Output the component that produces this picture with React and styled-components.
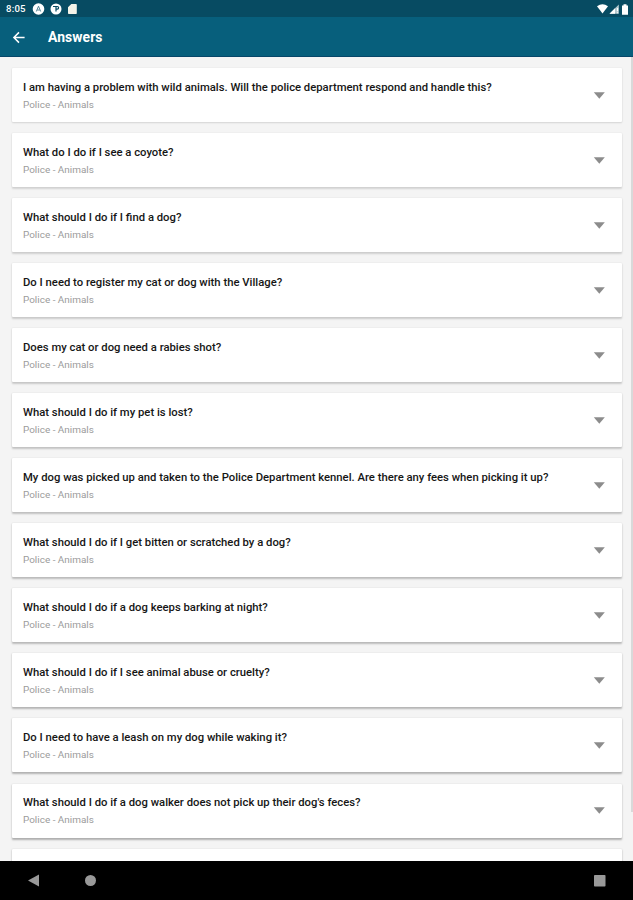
import React from "react";
import styled, { createGlobalStyle } from "styled-components";

const GlobalStyle = createGlobalStyle`
  * { box-sizing: border-box; }
  body { margin: 0; font-family: Roboto, sans-serif; background: #f4f4f4; }
`;

const Screen = styled.div`
  display: flex;
  flex-direction: column;
  width: 633px;
  height: 900px;
  overflow: hidden;
  background: #f4f4f4;
`;

const StatusBar = styled.div`
  display: flex;
  align-items: center;
  flex: none;
  height: 17px;
  padding: 1px 4px 0 6px;
  background: #074b62;
  color: #fff;
`;

const Clock = styled.span`
  width: 26px;
  font-size: 9.6px;
  font-weight: 500;
  line-height: 16px;
  letter-spacing: 0.2px;
`;

const StatusIcons = styled.div`
  display: flex;
  align-items: center;
  gap: ${(p) => p.$gap}px;
  margin-left: ${(p) => (p.$end ? "auto" : "0")};
  svg { display: block; }
`;

const AppBar = styled.header`
  display: flex;
  align-items: center;
  flex: none;
  height: 40px;
  padding: 1px 12px 0;
  gap: 22px;
  background: #075f7c;
  border-bottom: 1px solid #07476a;
  color: #fff;
`;

const BackButton = styled.button`
  display: flex;
  padding: 0;
  border: 0;
  background: none;
  color: inherit;
`;

const Title = styled.h1`
  margin: 0;
  font-size: 13.9px;
  font-weight: 700;
  line-height: 18px;
  letter-spacing: 0.08px;
`;

const Content = styled.div`
  display: flex;
  flex: 1;
  min-height: 0;
  overflow: hidden;
`;

const List = styled.main`
  display: flex;
  flex-direction: column;
  flex: 1;
  gap: 11.06px;
  padding: 11px 9px 0 12px;
`;

const Card = styled.article`
  display: flex;
  align-items: center;
  flex: none;
  height: 54px;
  padding: 0 17px 0 11px;
  border-radius: 1px;
  background: #fff;
  box-shadow: 0 ${(p) => 1 + p.$depth * 0.6}px 2px
      rgba(0, 0, 0, ${(p) => 0.12 + p.$depth * 0.16}),
    0 0 2px rgba(0, 0, 0, 0.07);
`;

const CardText = styled.div`
  flex: 1;
  padding-top: 1px;
  white-space: nowrap;
`;

const Question = styled.h2`
  margin: 0;
  color: #161616;
  font-size: 11.29px;
  font-weight: 500;
  line-height: 17px;
`;

const Category = styled.p`
  margin: 0;
  color: #9b9b9b;
  font-size: 9.95px;
  line-height: 17px;
`;

const ScrollTrack = styled.div`
  flex: none;
  width: 2px;
`;

const ScrollThumb = styled.div`
  height: 755px;
  background: #d9d9d9;
`;

const NavBar = styled.nav`
  display: flex;
  align-items: center;
  flex: none;
  height: 38.6px;
  padding: 0 27px;
  background: #000;
  color: #999;
  svg { display: block; }
  svg:nth-child(2) { margin-left: 44px; }
  svg:last-child { margin-left: auto; }
`;

const questions = [
  "I am having a problem with wild animals. Will the police department respond and handle this?",
  "What do I do if I see a coyote?",
  "What should I do if I find a dog?",
  "Do I need to register my cat or dog with the Village?",
  "Does my cat or dog need a rabies shot?",
  "What should I do if my pet is lost?",
  "My dog was picked up and taken to the Police Department kennel. Are there any fees when picking it up?",
  "What should I do if I get bitten or scratched by a dog?",
  "What should I do if a dog keeps barking at night?",
  "What should I do if I see animal abuse or cruelty?",
  "Do I need to have a leash on my dog while waking it?",
  "What should I do if a dog walker does not pick up their dog's feces?",
];

function AnswerCard({ question, depth }) {
  return (
    <Card $depth={depth}>
      <CardText>
        <Question>{question}</Question>
        <Category>Police - Animals</Category>
      </CardText>
      <svg width="12" height="7" viewBox="0 0 12 7">
        <path d="M.8.2h11L6.3 6.8z" fill="#8c8c8c" />
      </svg>
    </Card>
  );
}

export default function App() {
  return (
    <Screen>
      <GlobalStyle />
      <StatusBar>
        <Clock>8:05</Clock>
        <StatusIcons $gap={5}>
          <svg width="13" height="12" viewBox="0 0 13 12">
            <circle cx="6.5" cy="6" r="5.8" fill="#fff" />
            <path d="M4.3 8.5 6.5 3.2l2.2 5.3M5.2 7h2.6" fill="none" stroke="#47788a" strokeWidth=".9" />
          </svg>
          <svg width="12" height="12" viewBox="0 0 12 12">
            <circle cx="6" cy="6" r="5.5" fill="#fff" />
            <path d="M3 3.5h3v5M6 3.5h1.3a1.3 1.3 0 0 1 0 2.6H6" fill="none" stroke="#074b62" strokeWidth="1.2" />
          </svg>
          <svg width="11" height="12" viewBox="0 0 11 12">
            <path d="M4.3 1H9q.8 0 .8.8v8.4q0 .8-.8.8H1.8q-.8 0-.8-.8V4.3z" fill="#f4f4e9" />
          </svg>
        </StatusIcons>
        <StatusIcons $gap={1} $end>
          <svg width="11" height="10" viewBox="0 0 11 10">
            <path d="M0 2.2Q5.5-1.8 11 2.2L5.5 9.5z" fill="#fff" />
          </svg>
          <svg width="11" height="10" viewBox="0 0 11 10">
            <path d="M.5 9.8 9.8.5v9.3z" fill="#b4c8cf" />
            <path d="M.5 9.8 6 4.3v5.5z" fill="#fff" />
            <path d="M8.5 4v3.3M8.5 8.3v1" stroke="#fff" strokeWidth="1.2" />
          </svg>
          <svg width="8" height="11" viewBox="0 0 8 11">
            <path d="M2.5.3h3v1.2H7v9.2H1V1.5h1.5z" fill="#fff" />
          </svg>
        </StatusIcons>
      </StatusBar>
      <AppBar>
        <BackButton aria-label="Back">
          <svg width="14" height="13" viewBox="0 0 14 13">
            <path d="M12.6 6.5H2.2M7 1.4 1.9 6.5 7 11.6" fill="none" stroke="currentColor" strokeWidth="1.5" />
          </svg>
        </BackButton>
        <Title>Answers</Title>
      </AppBar>
      <Content>
        <List>
          {questions.map((q, i) => (
            <AnswerCard key={q} question={q} depth={i / 11} />
          ))}
          <Card $depth={1} />
        </List>
        <ScrollTrack>
          <ScrollThumb />
        </ScrollTrack>
      </Content>
      <NavBar>
        <svg width="13" height="13" viewBox="0 0 13 13">
          <path d="M12 .5v12L1 6.5z" fill="currentColor" />
        </svg>
        <svg width="13" height="13" viewBox="0 0 13 13">
          <circle cx="6.5" cy="6.5" r="5.5" fill="currentColor" />
        </svg>
        <svg width="13" height="13" viewBox="0 0 13 13">
          <rect x="1" y="1" width="11.5" height="11.5" rx=".8" fill="currentColor" />
        </svg>
      </NavBar>
    </Screen>
  );
}
